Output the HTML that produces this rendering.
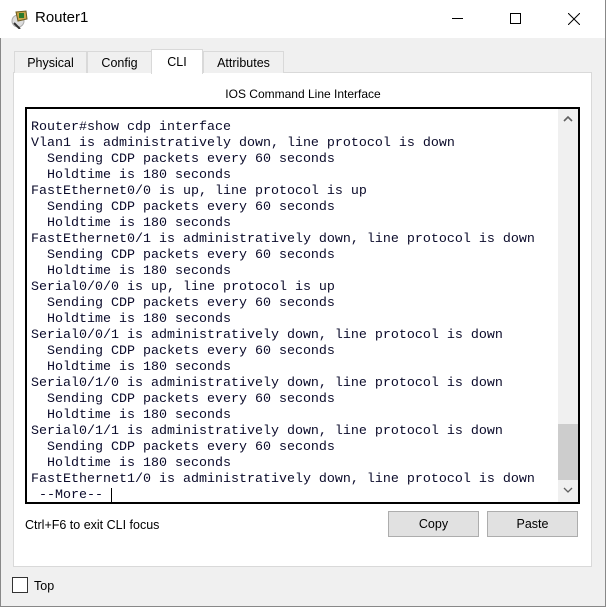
<!DOCTYPE html>
<html><head><meta charset="utf-8"><style>
*{margin:0;padding:0;box-sizing:border-box}
body{width:606px;height:607px;overflow:hidden;background:#f0f0f0;font-family:"Liberation Sans",sans-serif;position:relative}
.win{position:absolute;left:0;top:0;width:606px;height:607px;border:1px solid #888;border-top:none}
.title{position:absolute;left:0;top:0;width:605px;height:38px;background:#fff}
.title .t{position:absolute;left:35px;top:9px;font-size:15px;color:#000}
.tabs .tab{position:absolute;top:51px;height:22px;background:#f0f0f0;border:1px solid #d9d9d9;border-bottom:none;font-size:12.5px;text-align:center;line-height:22px}
.panel{position:absolute;left:13px;top:72px;width:579px;height:495px;background:#fff;border:1px solid #d9d9d9}
.term{position:absolute;left:25px;top:107px;width:555px;height:397px;border:2px solid #000;background:#fff;overflow:hidden}
pre{position:absolute;left:4px;top:11px;font-family:"Liberation Mono",monospace;font-size:13.33px;line-height:16px;color:#0a0a2a}
.sb{position:absolute;right:0;top:0;width:20px;height:393px;background:#f0f0f0}
.thumb{position:absolute;left:0;top:315px;width:20px;height:56px;background:#cdcdcd}
.btn{position:absolute;top:511px;width:91px;height:26px;background:#e1e1e1;border:1px solid #adadad;font-size:12.5px;text-align:center;line-height:24px}
</style></head><body>
<div class="win"></div>
<div class="title">
<svg style="position:absolute;left:10px;top:9px" width="20" height="20" viewBox="0 0 20 20"><circle cx="8" cy="12" r="6" fill="#ddd" stroke="#aaa"/><path d="M6 3 L16 2 L17 10 L8 12 Z" fill="#c9a64a" stroke="#6b5a1e"/><rect x="9" y="4" width="5" height="5" fill="#2a7a2a"/><path d="M4 14 L10 20" stroke="#333" stroke-width="2"/></svg>
<div class="t">Router1</div>
<div style="position:absolute;left:452px;top:18px;width:11px;height:1px;background:#000"></div>
<div style="position:absolute;left:510px;top:13px;width:11px;height:11px;border:1px solid #000"></div>
<svg style="position:absolute;left:568px;top:13px" width="12" height="12"><path d="M0 0L12 12M12 0L0 12" stroke="#000" stroke-width="1"/></svg>
</div>
<div class="panel"></div>
<div class="tabs">
<div class="tab" style="left:14px;width:73px">Physical</div>
<div class="tab" style="left:87px;width:65px">Config</div>
<div class="tab" style="left:151px;width:52px;top:49px;height:25px;background:#fff;line-height:25px">CLI</div>
<div class="tab" style="left:203px;width:81px">Attributes</div>
</div>
<div style="position:absolute;left:0;width:606px;top:87px;text-align:center;font-size:12px;color:#000">IOS Command Line Interface</div>
<div class="term">
<pre>Router#show cdp interface
Vlan1 is administratively down, line protocol is down
  Sending CDP packets every 60 seconds
  Holdtime is 180 seconds
FastEthernet0/0 is up, line protocol is up
  Sending CDP packets every 60 seconds
  Holdtime is 180 seconds
FastEthernet0/1 is administratively down, line protocol is down
  Sending CDP packets every 60 seconds
  Holdtime is 180 seconds
Serial0/0/0 is up, line protocol is up
  Sending CDP packets every 60 seconds
  Holdtime is 180 seconds
Serial0/0/1 is administratively down, line protocol is down
  Sending CDP packets every 60 seconds
  Holdtime is 180 seconds
Serial0/1/0 is administratively down, line protocol is down
  Sending CDP packets every 60 seconds
  Holdtime is 180 seconds
Serial0/1/1 is administratively down, line protocol is down
  Sending CDP packets every 60 seconds
  Holdtime is 180 seconds
FastEthernet1/0 is administratively down, line protocol is down
 --More-- <span style="border-left:1px solid #000"> </span></pre>
<div class="sb">
<svg style="position:absolute;left:5px;top:6px" width="10" height="7"><path d="M1 6L5 2L9 6" stroke="#606060" stroke-width="1.6" fill="none"/></svg>
<div class="thumb"></div>
<svg style="position:absolute;left:5px;top:378px" width="10" height="7"><path d="M1 1L5 5L9 1" stroke="#606060" stroke-width="1.3" fill="none"/></svg>
</div>
</div>
<div style="position:absolute;left:25px;top:518px;font-size:12.5px">Ctrl+F6 to exit CLI focus</div>
<div class="btn" style="left:388px">Copy</div>
<div class="btn" style="left:487px">Paste</div>
<div style="position:absolute;left:12px;top:577px;width:16px;height:16px;border:1px solid #333;background:#fff"></div>
<div style="position:absolute;left:34px;top:579px;font-size:12.5px">Top</div>
</body></html>
